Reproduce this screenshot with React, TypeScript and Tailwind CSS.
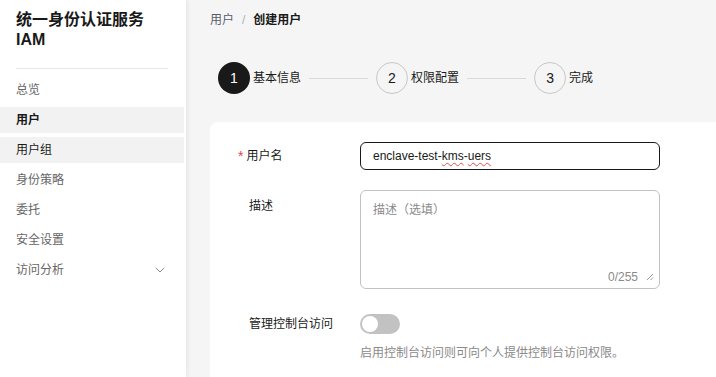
import { ChevronDown } from "lucide-react";

const FONT = "font-['Liberation_Sans','Noto_Sans_CJK_SC',sans-serif]";

const menu = [
  { label: "总览" },
  { label: "用户", active: true },
  { label: "用户组", hover: true },
  { label: "身份策略" },
  { label: "委托" },
  { label: "安全设置" },
  { label: "访问分析", sub: true },
];

function Sidebar() {
  return (
    <aside className="relative z-10 flex w-[186px] shrink-0 flex-col bg-white shadow-[2px_0_4px_rgba(0,0,0,0.06)]">
      <h1 className="px-4 pt-[10px] text-[16px] leading-[20px] font-bold text-[#191919]">
        统一身份认证服务
        <br />
        IAM
      </h1>
      <div className="mx-4 mt-[18px] h-px w-[152px] bg-[#e8e8e8]" />
      <nav className="mt-2 flex flex-col gap-1">
        {menu.map((item) => (
          <div
            key={item.label}
            className={
              "flex h-[26px] w-[184px] items-center justify-between pl-4 pr-[16px] text-[12px] " +
              (item.active
                ? "bg-[#f2f2f2] font-bold text-[#191919]"
                : item.hover
                  ? "bg-[#f2f2f2] text-[#191919]"
                  : "text-[#666666]")
            }
          >
            <span>{item.label}</span>
            {item.sub && <ChevronDown size={16} strokeWidth={1.5} className="text-[#8a8a8a]" />}
          </div>
        ))}
      </nav>
    </aside>
  );
}

function Step({ n, label, active }: { n: number; label: string; active?: boolean }) {
  return (
    <div className="flex items-center gap-[3px]">
      <div
        className={
          "flex size-8 items-center justify-center rounded-full text-[14px] " +
          (active ? "bg-[#191919] text-white" : "border border-[#c8c8c8] text-[#191919]")
        }
      >
        {n}
      </div>
      <span className="text-[12px] text-[#191919]">{label}</span>
    </div>
  );
}

function Line() {
  return <div className="mx-[8px] h-px w-[59px] bg-[#d9d9d9]" />;
}

export default function App() {
  return (
    <div className={`flex h-[377px] w-[716px] overflow-hidden bg-[#f5f5f5] ${FONT}`}>
      <Sidebar />
      <main className="flex min-w-0 flex-1 flex-col pl-6">
        <div className="mt-[12px] flex h-4 items-center gap-2 text-[12px]">
          <span className="text-[#575d6c]">用户</span>
          <span className="text-[#adb0b8]">/</span>
          <span className="font-bold text-[#191919]">创建用户</span>
        </div>

        <div className="mt-[34px] flex items-center pl-2">
          <Step n={1} label="基本信息" active />
          <Line />
          <Step n={2} label="权限配置" />
          <Line />
          <Step n={3} label="完成" />
        </div>

        <section className="mt-[28px] w-[540px] shrink-0 flex-1 rounded-tl-lg bg-white pl-[28px] pt-5">
          <div className="flex items-center">
            <label className="flex w-[122px] items-center gap-[3px] text-[12px] text-[#191919]">
              <span className="text-[14px] leading-none text-[#e54545]">*</span>
              用户名
            </label>
            <div className="flex h-7 w-[300px] items-center rounded-md border border-[#191919] px-3 text-[12px] text-[#191919]">
              enclave-test-
              <span className="underline decoration-[#e84b4b] decoration-wavy decoration-1 underline-offset-2">kms</span>
              -
              <span className="underline decoration-[#e84b4b] decoration-wavy decoration-1 underline-offset-2">uers</span>
            </div>
          </div>

          <div className="mt-5 flex items-start">
            <label className="w-[122px] pl-[11px] pt-[7px] text-[12px] text-[#191919]">描述</label>
            <div className="relative h-[99px] w-[300px] rounded-md border border-[#c2c2c2]">
              <p className="px-3 pt-[10px] text-[12px] text-[#8a8a8a]">描述（选填）</p>
              <div className="absolute right-[5px] bottom-[2px] flex items-center gap-[8px] text-[12px] text-[#8a8a8a]">
                <span>0/255</span>
                <svg width="8" height="8" viewBox="0 0 8 8" className="text-[#999]">
                  <path d="M7 1L1 7M7 4.5L4.5 7" stroke="currentColor" strokeWidth="1" fill="none" />
                </svg>
              </div>
            </div>
          </div>

          <div className="mt-[21px] flex h-7 items-center">
            <label className="w-[122px] pl-[11px] text-[12px] text-[#191919]">管理控制台访问</label>
            <div className="flex h-5 w-10 items-center rounded-full bg-[#c2c2c2] px-[2px]">
              <div className="size-4 rounded-full bg-white" />
            </div>
          </div>
          <p className="mt-[6px] pl-[122px] text-[12px] text-[#8a8a8a]">
            启用控制台访问则可向个人提供控制台访问权限。
          </p>
        </section>
      </main>
    </div>
  );
}
